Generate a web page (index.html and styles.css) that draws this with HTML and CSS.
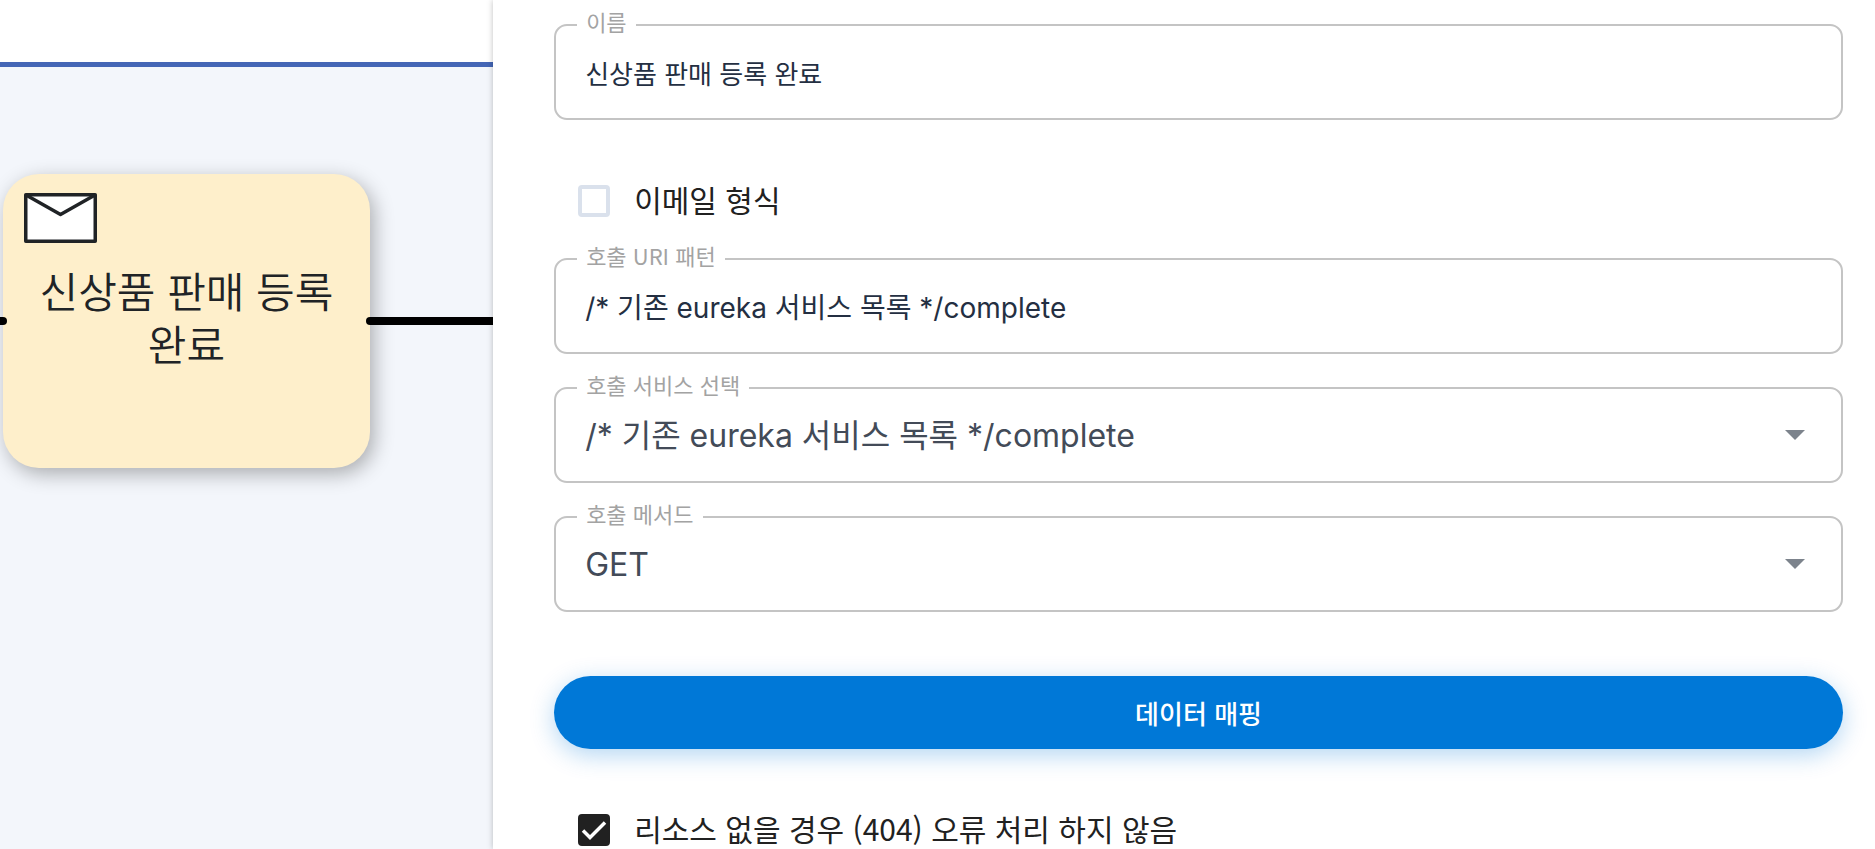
FILE: index.html
```html
<!DOCTYPE html>
<html lang="ko">
<head>
<meta charset="utf-8">
<title>신상품 판매 등록 완료</title>
<link rel="stylesheet" href="styles.css">
</head>
<body>
<div class="layout">
  <main class="canvas">
    <div class="lane"></div>
    <div class="task">
      <svg class="task-icon" width="73" height="50" viewBox="0 0 73 50" aria-hidden="true">
        <rect x="1.75" y="1.75" width="69.5" height="46.5"/>
        <path d="M2 2 36.500 21.500 71 2"/>
      </svg>
      <p class="task-name">신상품 판매 등록 완료</p>
    </div>
    <svg class="flow" width="100%" height="16" aria-hidden="true">
      <line x1="-8" y1="8" x2="3" y2="8"/>
      <line x1="370" y1="8" x2="900" y2="8"/>
    </svg>
  </main>
  <form class="panel">
    <div class="field">
      <label for="name">이름</label>
      <input id="name" type="text" value="신상품 판매 등록 완료">
    </div>
    <div class="check">
      <input id="email" type="checkbox">
      <label for="email">이메일 형식</label>
    </div>
    <div class="field">
      <label for="uri">호출 URI 패턴</label>
      <input id="uri" class="latin" type="text" value="/* 기존 eureka 서비스 목록 */complete">
    </div>
    <div class="field">
      <label for="service">호출 서비스 선택</label>
      <select id="service"><option>/* 기존 eureka 서비스 목록 */complete</option></select>
      <svg class="arrow" width="20" height="10" viewBox="0 0 20 10" aria-hidden="true"><path d="M0 0h20L10 10z"/></svg>
    </div>
    <div class="field">
      <label for="method">호출 메서드</label>
      <select id="method"><option>GET</option></select>
      <svg class="arrow" width="20" height="10" viewBox="0 0 20 10" aria-hidden="true"><path d="M0 0h20L10 10z"/></svg>
    </div>
    <button class="mapping" type="button">데이터 매핑</button>
    <div class="check">
      <span class="box">
        <input id="ignore" type="checkbox" checked>
        <svg class="tick" width="32" height="32" viewBox="0 0 32 32" aria-hidden="true"><path d="M5 16.500 12 23.500 27 8.500"/></svg>
      </span>
      <label for="ignore">리소스 없을 경우 (404) 오류 처리 하지 않음</label>
    </div>
  </form>
</div>
</body>
</html>
```
FILE: styles.css
```css
* {
  box-sizing: border-box;
}

body {
  margin: 0;
  background: #fff;
  font-family: "Noto Sans CJK KR", sans-serif;
}

.layout {
  display: flex;
  height: 100vh;
  overflow: hidden;
}

/* Diagram canvas */
.canvas {
  position: relative;
  flex: 0 0 26.3%;
  padding-top: 62px;
  overflow: hidden;
}

.lane {
  height: 100%;
  border-top: 5px solid #4466b6;
  background: #f3f6fb;
}

.flow {
  position: absolute;
  left: 0;
  top: 313px;
  stroke: #000;
  stroke-width: 8;
  stroke-linecap: round;
}

.task {
  position: absolute;
  left: 3px;
  top: 174px;
  width: 367px;
  height: 294px;
  padding: 19px 21px;
  border-radius: 36px;
  background: #feefcb;
  box-shadow: 4px 6px 20px rgba(0, 0, 0, 0.3);
}

.task-icon {
  display: block;
}

.task-icon rect {
  fill: #fff;
}

.task-icon rect,
.task-icon path {
  stroke: #202326;
  stroke-width: 3.5;
  stroke-linejoin: round;
}

.task-icon path {
  fill: none;
}

.task-name {
  margin: 24px 0 0;
  color: #202326;
  font: 350 42px/53px "Liberation Sans", "Noto Sans CJK KR", sans-serif;
  text-align: center;
  word-break: keep-all;
}

/* Property panel */
.panel {
  position: relative;
  display: flex;
  flex: 1;
  flex-direction: column;
  padding: 24px 32px 0 61px;
  overflow: hidden;
  background: #fff;
  box-shadow: 0 0 6px rgba(0, 0, 0, 0.25);
}

.panel > * {
  flex-shrink: 0;
}

.field {
  position: relative;
  display: grid;
  align-items: center;
}

.field + .field {
  margin-top: 33px;
}

.field label {
  position: absolute;
  left: 23px;
  top: -17px;
  padding: 0 9px;
  background: #fff;
  color: #a3a3a3;
  font-size: 22px;
  line-height: 28px;
}

.field input,
.field select {
  grid-area: 1 / 1;
  width: 100%;
  height: 96px;
  padding: 0 29px;
  border: 2px solid #c4c4c4;
  border-radius: 13px;
  background: #fff;
  appearance: none;
  color: #242f42;
  font-family: inherit;
  font-size: 26px;
}

.field .latin,
.field select {
  font-family: Inter, "Noto Sans CJK KR", sans-serif;
  font-size: 28px;
}

.field select {
  color: #434b58;
  font-size: 32px;
}

.arrow {
  grid-area: 1 / 1;
  justify-self: end;
  margin-right: 38px;
  fill: #7c838c;
  pointer-events: none;
}

.check {
  display: flex;
  align-items: center;
  gap: 24px;
  height: 48px;
  margin: 57px 0 33px;
  padding-left: 24px;
  color: #212121;
  font-size: 30px;
}

.check label {
  padding-bottom: 4px;
  line-height: 36px;
}

.check:last-child {
  margin-bottom: 0;
}

.check input {
  width: 32px;
  height: 32px;
  margin: 0;
  border: 4px solid #dae1ec;
  border-radius: 4px;
  appearance: none;
}

.check input:checked {
  border-color: #212121;
  background: #212121;
}

.box {
  display: grid;
}

.box > * {
  grid-area: 1 / 1;
}

.tick {
  fill: none;
  stroke: #fff;
  stroke-width: 3.5;
  pointer-events: none;
}

.mapping {
  height: 73px;
  margin-top: 64px;
  border: 0;
  border-radius: 37px;
  background: #0078d7;
  box-shadow: 0 6px 24px rgba(0, 120, 215, 0.3);
  color: #fff;
  font-family: inherit;
  font-size: 26px;
  font-weight: 500;
}
```
